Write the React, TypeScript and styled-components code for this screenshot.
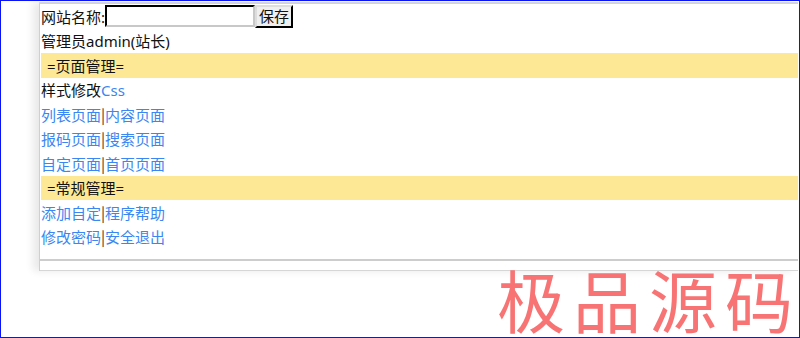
import styled, { createGlobalStyle } from "styled-components";

const Global = createGlobalStyle`
  html, body { margin: 0; padding: 0; }
  body {
    width: 800px;
    height: 338px;
    box-sizing: border-box;
    border: 1px solid #0a14f0;
    background: #fff;
    font-family: "Noto Sans", "Noto Sans CJK SC", sans-serif;
    font-size: 15px;
    color: #111;
    overflow: hidden;
    position: relative;
  }
`

const Page = styled.div`
  padding: 1px 1px 0 38px;
`

const Frame = styled.div`
  border-top: 2px solid #d4d4d4;
  border-left: 1px solid #cfcfcf;
  box-shadow: -6px 0 8px rgba(0, 0, 0, 0.09);
  background: #fff;
`

const Panel = styled.div`
  padding: 0 0 10px 1px;
  border-bottom: 2px solid #cdcdcd;
`

const Footer = styled.div`
  height: 9px;
  border-bottom: 1px solid #d6d6d6;
`

const Row = styled.div<{ $band?: boolean }>`
  height: 24.5px;
  display: flex;
  align-items: center;
  white-space: pre;
  padding-left: ${p => (p.$band ? "6px" : "0")};
  background: ${p => (p.$band ? "#fde995" : "transparent")};
`

const Field = styled.input`
  width: 150px;
  height: 22px;
  box-sizing: border-box;
  border: 2px inset #767676;
  border-color: #3a3a3a #c8c8c8 #c8c8c8 #3a3a3a;
  padding: 0 2px;
  margin: 0;
`

const Button = styled.button`
  height: 23px;
  box-sizing: border-box;
  padding: 0 2px;
  margin: 0;
  border: 2px outset #555;
  border-color: #ddd #222 #222 #ddd;
  background: #efefef;
  font: inherit;
  color: #111;
  line-height: 18px;
`

const Link = styled.a`
  color: #3a86f2;
  text-decoration: none;
`

const Sep = styled.span`
  font-family: "Noto Sans CJK SC", sans-serif;
  color: #333;
`

const Mark = styled.div`
  position: absolute;
  right: 6px;
  bottom: 4px;
  display: flex;
  gap: 8px;
  font-family: "Noto Sans CJK SC", sans-serif;
  font-size: 68px;
  font-weight: 400;
  line-height: 68px;
  color: #f87474;
`

const pairs: [string, string][] = [
  ["列表页面", "内容页面"],
  ["报码页面", "搜索页面"],
  ["自定页面", "首页页面"],
]

const pairs2: [string, string][] = [
  ["添加自定", "程序帮助"],
  ["修改密码", "安全退出"],
]

const LinkPair = ({ a, b }: { a: string; b: string }) => (
  <Row>
    <Link href="#">{a}</Link>
    <Sep>|</Sep>
    <Link href="#">{b}</Link>
  </Row>
)

export default function App() {
  return (
    <>
      <Global />
      <Page>
        <Frame>
          <Panel>
            <Row>
              网站名称:<Field type="text" />
              <Button>保存</Button>
            </Row>
            <Row>管理员admin(站长)</Row>
            <Row $band>=页面管理=</Row>
            <Row>
              样式修改<Link href="#">Css</Link>
            </Row>
            {pairs.map(([a, b]) => (
              <LinkPair key={a} a={a} b={b} />
            ))}
            <Row $band>=常规管理=</Row>
            {pairs2.map(([a, b]) => (
              <LinkPair key={a} a={a} b={b} />
            ))}
          </Panel>
          <Footer />
        </Frame>
      </Page>
      <Mark>
        {"极品源码".split("").map(c => (
          <span key={c}>{c}</span>
        ))}
      </Mark>
    </>
  )
}
